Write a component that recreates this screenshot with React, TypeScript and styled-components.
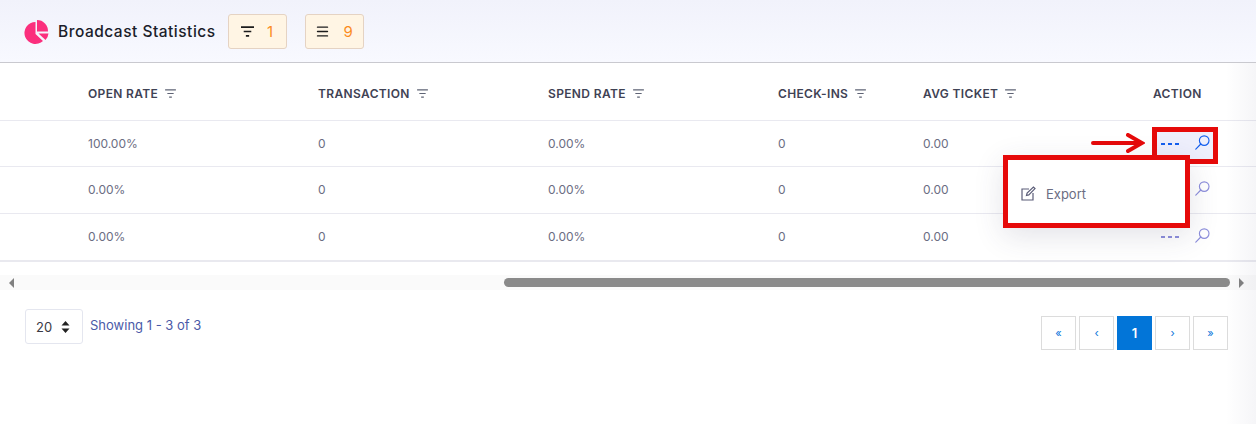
import React from 'react';
import styled, { createGlobalStyle } from 'styled-components';
import { Menu } from 'lucide-react';

const GlobalStyle = createGlobalStyle`
  html, body {
    margin: 0;
    padding: 0;
    background: #fff;
    font-family: Inter, "Open Sans", "Liberation Sans", sans-serif;
  }
`;

const rows = [
  { open: '100.00%', active: true },
  { open: '0.00%', active: false },
  { open: '0.00%', active: false },
];

const columns = [
  { label: 'OPEN RATE', filter: true },
  { label: 'TRANSACTION', filter: true },
  { label: 'SPEND RATE', filter: true },
  { label: 'CHECK-INS', filter: true },
  { label: 'AVG TICKET', filter: true },
  { label: 'ACTION', filter: false },
];

const FilterLines: React.FC<{ color?: string; size?: number; weight?: number }> = ({
  color = '#5f6475',
  size = 11,
  weight = 1.2,
}) => (
  <svg width={size} height={Math.round(size * 0.85)} viewBox="0 0 12 10" fill="none" stroke={color} strokeWidth={weight}>
    <path d="M0 1h12M2.5 5h7M4.5 9h3" />
  </svg>
);

const PieLogo = () => (
  <svg width="26" height="26" viewBox="0 0 26 26">
    <path d="M11.5 3a11 11 0 1 0 7.5 19l-7.5-7z" fill="#fb2f7d" />
    <path d="M13 1a11 11 0 0 1 11 11.5h-11z" fill="#fb2f7d" />
    <path d="M14.5 14.5h10a11 11 0 0 1-3 6.5z" fill="#fb2f7d" />
  </svg>
);

const MagnifierSvg = styled.svg`
  display: block;
  margin-bottom: 2px;
`;

const Magnifier: React.FC<{ color: string }> = ({ color }) => (
  <MagnifierSvg width="15" height="15" viewBox="0 0 15 15" fill="none" stroke={color} strokeWidth="1.15">
    <circle cx="9.2" cy="5.6" r="4.8" />
    <path d="M5.8 9L0.8 14.2" strokeLinecap="round" />
  </MagnifierSvg>
);

const ExportIcon = () => (
  <svg width="15" height="15" viewBox="0 0 15 15" fill="none" stroke="#5b5d78" strokeWidth="1.2">
    <path d="M8 3H1v11h11V7" />
    <path d="M5.5 9.5l.6-2.4L12.4 1 14 2.6 7.8 8.9z" />
  </svg>
);

const App: React.FC<{}> = () => {
  return (
    <Page>
      <GlobalStyle />
      <Header>
        <PieLogo />
        <Title>Broadcast Statistics</Title>
        <CountButton>
          <FilterLines color="#1c1c1c" size={13} weight={1.6} />
          <Count>1</Count>
        </CountButton>
        <CountButton>
          <Menu size={15} color="#1c1c1c" strokeWidth={2.2} />
          <Count>9</Count>
        </CountButton>
      </Header>

      <TableArea>
        <HeadRow>
          {columns.map((col) => (
            <HeadCell key={col.label}>
              {col.label}
              {col.filter && <FilterLines />}
            </HeadCell>
          ))}
        </HeadRow>
        {rows.map((row, i) => (
          <Row key={i}>
            <Cell>{row.open}</Cell>
            <Cell>0</Cell>
            <Cell>0.00%</Cell>
            <Cell>0</Cell>
            <Cell>0.00</Cell>
            <ActionCell>
              <Dots $active={row.active}>
                <i />
                <i />
                <i />
              </Dots>
              <Magnifier color={row.active ? '#0d5ff0' : '#8d8fdc'} />
            </ActionCell>
          </Row>
        ))}

        <Arrow width="54" height="20" viewBox="0 0 54 20" fill="none">
          <path d="M2 10h48M37 2l14 8-14 8" stroke="#e60a0a" strokeWidth="4" strokeLinecap="round" />
        </Arrow>
        <ActionHighlight />
        <Dropdown>
          <DropdownItem>
            <ExportIcon />
            Export
          </DropdownItem>
        </Dropdown>
      </TableArea>

      <ScrollBar>
        <ScrollArrowLeft />
        <ScrollTrack>
          <ScrollThumb />
        </ScrollTrack>
        <ScrollArrowRight />
      </ScrollBar>

      <Footer>
        <PageInfo>
          <SizeSelect>
            20
            <Updown viewBox="0 0 8 12" width="9" height="12">
              <path d="M4 0l4 4.6H0zM4 12L0 7.4h8z" fill="#222" />
            </Updown>
          </SizeSelect>
          <Showing>Showing 1 - 3 of 3</Showing>
        </PageInfo>
        <Pager>
          <PageButton>«</PageButton>
          <PageButton>‹</PageButton>
          <PageButton $current>1</PageButton>
          <PageButton>›</PageButton>
          <PageButton>»</PageButton>
        </Pager>
      </Footer>
      <StickyShade />
    </Page>
  );
};

const Page = styled.div`
  position: relative;
  width: 1256px;
  height: 424px;
  overflow: hidden;
  background: #fff;
`;

const StickyShade = styled.div`
  position: absolute;
  top: 63px;
  right: 0;
  bottom: 0;
  width: 30px;
  background: linear-gradient(90deg, rgba(90, 90, 130, 0) 0%, rgba(90, 90, 130, 0.06) 100%);
  pointer-events: none;
`;

const Header = styled.div`
  height: 63px;
  box-sizing: border-box;
  display: flex;
  align-items: center;
  padding: 1px 0 0 24px;
  background: linear-gradient(180deg, #f1f2fb 0%, #f8f9ff 100%);
  border-bottom: 1px solid #c9c9cf;
`;

const Title = styled.div`
  margin-left: 8px;
  margin-right: 12px;
  font-size: 15.5px;
  font-weight: 500;
  letter-spacing: 0.5px;
  white-space: nowrap;
  color: #1b1d2a;
`;

const CountButton = styled.div`
  width: 59px;
  height: 35px;
  box-sizing: border-box;
  display: flex;
  align-items: center;
  justify-content: center;
  gap: 13px;
  margin-right: 18px;
  background: #fff5e4;
  border: 1px solid #e5d3c3;
  border-radius: 3px;
`;

const Count = styled.span`
  font-size: 15px;
  color: #fb8c1e;
`;

const TableArea = styled.div`
  position: relative;
  border-bottom: 2px solid #e9e9ef;
`;

const HeadRow = styled.div`
  display: grid;
  grid-template-columns: 230px 230px 230px 145px 230px 1fr;
  align-items: center;
  height: 58px;
  padding-left: 88px;
  padding-top: 4px;
  box-sizing: border-box;
  border-bottom: 1px solid #e9e9f0;
`;

const HeadCell = styled.div`
  display: flex;
  align-items: center;
  gap: 7px;
  font-size: 12px;
  font-weight: 600;
  letter-spacing: 0.35px;
  color: #3f4254;
`;

const Row = styled.div`
  display: grid;
  grid-template-columns: 230px 230px 230px 145px 230px 1fr;
  align-items: center;
  height: 46px;
  padding-left: 88px;
  box-sizing: border-box;
  border-bottom: 1px solid #e9e9f0;
  &:nth-of-type(3) {
    height: 47px;
    padding-bottom: 1px;
  }
  &:nth-of-type(4) {
    padding-bottom: 1px;
    border-bottom: 0;
  }
`;

const Cell = styled.div`
  font-size: 12px;
  color: #6b6d82;
`;

const ActionCell = styled.div`
  display: flex;
  align-items: center;
  gap: 16px;
  padding-left: 8px;
`;

const Dots = styled.span<{ $active: boolean }>`
  display: flex;
  gap: 3px;
  width: 18px;
  i {
    width: 4px;
    height: 2px;
    background: ${(p) => (p.$active ? '#0d5ff0' : '#8d8fdc')};
  }
`;

const Arrow = styled.svg`
  position: absolute;
  left: 1091px;
  top: 70px;
`;

const ActionHighlight = styled.div`
  position: absolute;
  left: 1152px;
  top: 64px;
  width: 66px;
  height: 37px;
  box-sizing: border-box;
  border: 5px solid #e60a0a;
  background: rgba(90, 100, 230, 0.1);
`;

const Dropdown = styled.div`
  position: absolute;
  left: 1003px;
  top: 92px;
  width: 187px;
  height: 73px;
  box-sizing: border-box;
  display: flex;
  align-items: center;
  padding: 4px 0 0 13px;
  background: #fff;
  border: 5px solid #e60a0a;
  box-shadow: 0 8px 30px rgba(60, 60, 90, 0.14);
`;

const DropdownItem = styled.div`
  display: flex;
  align-items: center;
  gap: 10px;
  font-size: 13px;
  color: #6b6d82;
`;

const ScrollBar = styled.div`
  display: flex;
  align-items: center;
  height: 15px;
  margin-top: 13px;
  background: #fafafa;
`;

const ScrollArrowLeft = styled.div`
  width: 0;
  height: 0;
  margin: 0 8px 0 9px;
  border-top: 5px solid transparent;
  border-bottom: 5px solid transparent;
  border-right: 5px solid #808080;
`;

const ScrollArrowRight = styled.div`
  width: 0;
  height: 0;
  margin: 0 12px 0 9px;
  border-top: 5px solid transparent;
  border-bottom: 5px solid transparent;
  border-left: 5px solid #808080;
`;

const ScrollTrack = styled.div`
  flex: 1;
  height: 9px;
  display: flex;
  justify-content: flex-end;
`;

const ScrollThumb = styled.div`
  width: 726px;
  height: 9px;
  border-radius: 5px;
  background: #8a8a8a;
`;

const Footer = styled.div`
  display: flex;
  justify-content: space-between;
  align-items: flex-start;
  padding: 19px 28px 0 25px;
`;

const PageInfo = styled.div`
  display: flex;
  gap: 7px;
`;

const SizeSelect = styled.div`
  width: 58px;
  height: 35px;
  box-sizing: border-box;
  display: flex;
  align-items: center;
  gap: 9px;
  padding-left: 10px;
  border: 1px solid #e4e6ef;
  border-radius: 3px;
  font-size: 13px;
  color: #3a3a44;
`;

const Updown = styled.svg`
  display: block;
`;

const Showing = styled.div`
  font-size: 13px;
  line-height: 33px;
  color: #4a5aa8;
`;

const Pager = styled.div`
  display: flex;
  gap: 3px;
  margin-top: 7px;
`;

const PageButton = styled.div<{ $current?: boolean }>`
  width: 35px;
  height: 34px;
  box-sizing: border-box;
  display: flex;
  align-items: center;
  justify-content: center;
  font-size: ${(p) => (p.$current ? '13px' : '11px')};
  font-weight: ${(p) => (p.$current ? 600 : 400)};
  color: ${(p) => (p.$current ? '#fff' : '#0a74da')};
  background: ${(p) => (p.$current ? '#0275d8' : '#fff')};
  border: 1px solid ${(p) => (p.$current ? '#0275d8' : '#dcdcdc')};
`;

export default App;
